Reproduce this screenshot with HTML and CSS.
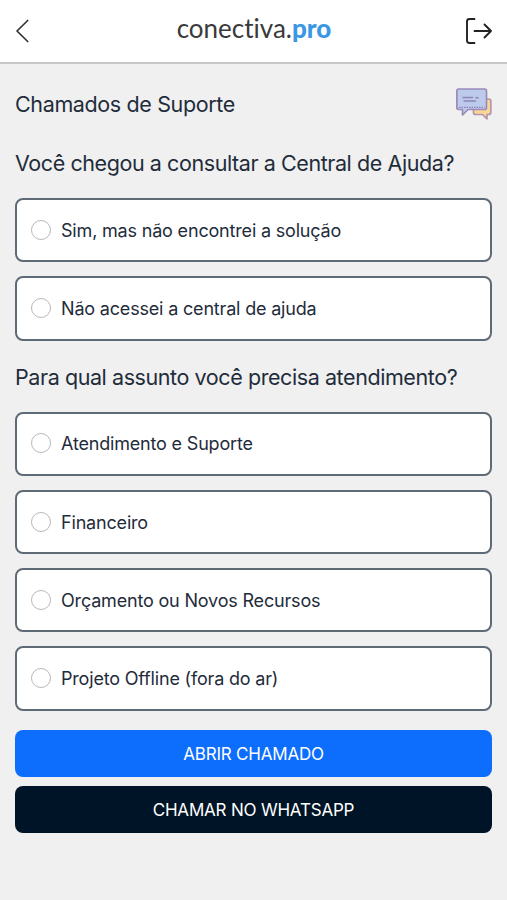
FILE: index.html
```html
<!DOCTYPE html>
<html lang="pt-BR">
<head>
  <meta charset="UTF-8" />
  <meta name="viewport" content="width=device-width, initial-scale=1.0"/>
  <title>Chamados de Suporte</title>
  <link rel="stylesheet" href="styles.css">
</head>
<body>

  <header class="topbar">
    <a class="back" href="#" aria-label="Voltar">
      <svg width="14" height="24" viewBox="0 0 14 24" fill="none" stroke="#333" stroke-width="1.7" stroke-linecap="round" stroke-linejoin="round">
        <path d="M12.700 1.500L2 12l10.700 10.500"/>
      </svg>
    </a>
    <div class="logo">conectiva.<b>pro</b></div>
    <a class="logout" href="#" aria-label="Sair">
      <svg width="28" height="28" viewBox="0 0 28 28" fill="none" stroke="#222" stroke-width="1.9" stroke-linecap="round" stroke-linejoin="round">
        <path d="M9.500 2H4.500Q2 2 2 4.500V23.500Q2 26 4.500 26H9.500"/>
        <path d="M9.500 14H26M19.500 7.500L26 14l-6.500 6.500"/>
      </svg>
    </a>
  </header>

  <main class="content">
    <div class="title-row">
      <h1 class="title">Chamados de Suporte</h1>
      <svg class="chat" width="36" height="32" viewBox="0 0 36 32" stroke-width="1.7" stroke-linejoin="round">
        <path fill="#f9d897" stroke="#b793ae" d="M19 11H32.500Q34.800 11 34.800 13V24.500Q34.800 26.500 32.500 26.500H31V30.800L26.500 26.500H19.500Q17.500 26.500 17.500 24.500V11Z"/>
        <path fill="#bccbec" stroke="#9b8bb9" d="M2.500 1H28.500Q30.500 1 30.500 3V19.500Q30.500 21.500 28.500 21.500H12L6.500 27V21.500H2.500Q.8 21.500 .8 19.500V3Q.8 1 2.500 1Z"/>
        <path fill="none" stroke="#8d84b6" stroke-width="1.4" d="M6.500 9.500H17M19.500 9.500L22.500 10M7.500 13H20"/>
        <path fill="none" stroke="#8f83b8" stroke-width="1.2" stroke-dasharray="1.500 1" d="M3 19.300H28.500"/>
      </svg>
    </div>

    <form>
      <h2 class="question">Você chegou a consultar a Central de Ajuda?</h2>
      <div class="options">
        <label class="option"><input type="radio" name="central" value="sim" /><span>Sim, mas não encontrei a solução</span></label>
        <label class="option"><input type="radio" name="central" value="nao" /><span>Não acessei a central de ajuda</span></label>
      </div>

      <h2 class="question">Para qual assunto você precisa atendimento?</h2>
      <div class="options">
        <label class="option"><input type="radio" name="assunto" value="suporte" /><span>Atendimento e Suporte</span></label>
        <label class="option"><input type="radio" name="assunto" value="financeiro" /><span>Financeiro</span></label>
        <label class="option"><input type="radio" name="assunto" value="orcamento" /><span>Orçamento ou Novos Recursos</span></label>
        <label class="option"><input type="radio" name="assunto" value="offline" /><span>Projeto Offline (fora do ar)</span></label>
      </div>

      <div class="actions">
        <button class="btn primary" type="submit">ABRIR CHAMADO</button>
        <button class="btn dark" type="button">CHAMAR NO WHATSAPP</button>
      </div>
    </form>
  </main>

</body>
</html>
```
FILE: styles.css
```css
* {
  box-sizing: border-box;
}
body {
  margin: 0;
  min-height: 100vh;
  background-color: #f0f0f0;
  color: #1f2c3b;
  font-family: Inter, "Liberation Sans", sans-serif;
}
.topbar {
  display: flex;
  align-items: center;
  justify-content: space-between;
  height: 64px;
  padding: 0 14px 0 15px;
  background-color: #fff;
  border-bottom: 2px solid #c6c6c6;
}
.topbar svg {
  display: block;
}
.back {
  width: 28px;
}
.logo {
  font-family: Lato, sans-serif;
  font-size: 26px;
  font-variant-ligatures: none;
  line-height: 30px;
  padding-bottom: 6px;
  color: #3a3a3a;
}
.logo b {
  color: #3b97e3;
  font-weight: 900;
}
.content {
  padding: 24px 15px;
}
.title-row {
  display: flex;
  justify-content: space-between;
  height: 32px;
}
.title, .question {
  margin: 0;
  font-size: 21.5px;
  line-height: 32px;
  font-weight: 400;
  letter-spacing: -0.37px;
}
.question {
  margin: 27px 0 19px;
  letter-spacing: -0.42px;
}
.question + .options + .question {
  margin-top: 20px;
}
.options {
  display: grid;
  gap: 14px;
}
.option {
  display: flex;
  align-items: center;
  height: 64.300px;
  padding: 0 14px;
  background-color: #fff;
  border: 2px solid #5f6a77;
  border-radius: 8px;
  font-size: 18px;
  letter-spacing: -0.18px;
}
.option input {
  appearance: none;
  width: 20px;
  height: 20px;
  margin: 0 10px 1px 0;
  border: 1px solid #b8b8b8;
  border-radius: 50%;
  background-color: #fff;
}
.option input:checked {
  border: 6px solid #0d6efd;
}
.actions {
  display: grid;
  gap: 9.500px;
  margin-top: 19px;
}
.btn {
  height: 47px;
  padding: 1px 0 0;
  border: none;
  border-radius: 8px;
  color: #fff;
  font-family: inherit;
  font-size: 17px;
  letter-spacing: -0.2px;
  cursor: pointer;
}
.primary {
  background-color: #0d6efd;
}
.dark {
  background-color: #001427;
}
```
